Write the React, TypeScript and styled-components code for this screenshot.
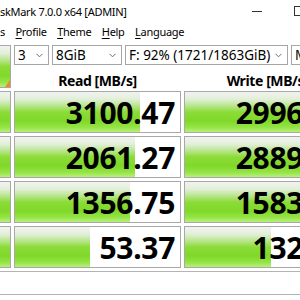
import React from 'react';
import styled, { createGlobalStyle } from 'styled-components';

const GlobalStyle = createGlobalStyle`
    html, body {
        margin: 0;
        padding: 0;
        background: #ffffff;
        overflow: hidden;
    }
    body {
        font-family: "Noto Sans", "Open Sans", sans-serif;
        color: #000000;
    }
`;

const results = [
    { read: 3100.47, write: 2996.52 },
    { read: 2061.27, write: 2889.41 },
    { read: 1356.75, write: 1583.03 },
    { read: 53.37, write: 132.87 },
];

// crystaldiskmark meter is log scaled
function meter(value: number) {
    const pct = 15.8 + 17.2 * Math.log10(value);
    return Math.max(0, Math.min(100, pct));
}

function Chevron() {
    return (
        <svg width="7" height="5" viewBox="0 0 7 5">
            <polyline points="0.5,0.8 3.5,3.8 6.5,0.8" fill="none" stroke="#707070" strokeWidth="1" />
        </svg>
    );
}

export default function App() {
    return (
        <Viewport>
            <GlobalStyle />
            <Window>
                <TitleBar>
                    <Title>skMark 7.0.0 x64 [ADMIN]</Title>
                    <CaptionButton>
                        <svg width="10" height="10" viewBox="0 0 10 10">
                            <line x1="0" y1="5.5" x2="10" y2="5.5" stroke="#333" strokeWidth="1" />
                        </svg>
                    </CaptionButton>
                    <CaptionButton>
                        <svg width="10" height="10" viewBox="0 0 10 10">
                            <rect x="0.5" y="0.5" width="9" height="9" fill="none" stroke="#333" strokeWidth="1" />
                        </svg>
                    </CaptionButton>
                </TitleBar>

                <MenuBar>
                    <MenuItem $cut>s</MenuItem>
                    <MenuItem><u>P</u>rofile</MenuItem>
                    <MenuItem><u>T</u>heme</MenuItem>
                    <MenuItem><u>H</u>elp</MenuItem>
                    <MenuItem><u>L</u>anguage</MenuItem>
                </MenuBar>

                <TopSection>
                    <AllButton />
                    <Controls>
                        <ComboRow>
                            <Combo $width={35}><span>3</span><Chevron /></Combo>
                            <Combo $width={70}><span>8GiB</span><Chevron /></Combo>
                            <Combo $width={163}><span>F: 92% (1721/1863GiB)</span><Chevron /></Combo>
                            <Combo $width={60}><span>MB/s</span><Chevron /></Combo>
                        </ComboRow>
                        <HeaderRow>
                            <HeaderLabel>Read [MB/s]</HeaderLabel>
                            <HeaderLabel>Write [MB/s]</HeaderLabel>
                        </HeaderRow>
                    </Controls>
                </TopSection>

                <ResultGrid>
                    {results.map((r, i) => (
                        <React.Fragment key={i}>
                            <TestButton />
                            <Meter style={{ backgroundSize: `${meter(r.read)}% 100%` }}>
                                {r.read.toFixed(2)}
                            </Meter>
                            <Meter style={{ backgroundSize: `${meter(r.write)}% 100%` }}>
                                {r.write.toFixed(2)}
                            </Meter>
                        </React.Fragment>
                    ))}
                </ResultGrid>

                <CommentBox />
            </Window>
        </Viewport>
    );
};

const greenGradient = `linear-gradient(to bottom,
    #f2f3f1 0%,
    #e2efd9 18%,
    #b4e585 36%,
    #8cdc38 50%,
    #80d82a 72%,
    #94e444 88%,
    #b8f07c 100%)`;

const Viewport = styled.div`
    width: 300px;
    height: 300px;
    overflow: hidden;
    background: #ffffff;
`;

const Window = styled.div`
    width: 360px;
    display: flex;
    flex-direction: column;
`;

const TitleBar = styled.div`
    display: flex;
    align-items: center;
    height: 22px;
    font-size: 11px;
    letter-spacing: -0.3px;
`;

const Title = styled.div`
    flex: 0 0 236px;
    white-space: nowrap;
`;

const CaptionButton = styled.div`
    width: 42px;
    height: 22px;
    display: flex;
    align-items: center;
    justify-content: center;
`;

const MenuBar = styled.div`
    display: flex;
    align-items: center;
    height: 19px;
    font-size: 11px;
    letter-spacing: -0.3px;
    & u {
        text-decoration: underline;
        text-underline-offset: 2px;
    }
`;

const MenuItem = styled.div<{ $cut?: boolean }>`
    padding: ${p => (p.$cut ? '0 5px 0 0' : '0 5px 0 5.5px')};
    white-space: nowrap;
`;

const TopSection = styled.div`
    display: grid;
    grid-template-columns: 11px 1fr;
    column-gap: 3px;
    margin-top: 4px;
`;

const AllButton = styled.div`
    position: relative;
    box-sizing: border-box;
    border: 1px solid #a8a8a8;
    border-left: none;
    background: ${greenGradient};
    &::after {
        content: '';
        position: absolute;
        right: 0;
        bottom: 0;
        border-style: solid;
        border-width: 0 0 7px 5px;
        border-color: transparent transparent #f08a24 transparent;
    }
`;

const Controls = styled.div`
    display: flex;
    flex-direction: column;
`;

const ComboRow = styled.div`
    display: flex;
    gap: 3px;
`;

const Combo = styled.div<{ $width: number }>`
    flex: 0 0 ${p => p.$width}px;
    box-sizing: border-box;
    height: 20px;
    border: 1px solid #a6a6a6;
    background: #ffffff;
    display: flex;
    align-items: center;
    justify-content: space-between;
    padding: 0 5px 0 3px;
    font-size: 13.5px;
    white-space: nowrap;
    overflow: hidden;
`;

const HeaderRow = styled.div`
    display: grid;
    grid-template-columns: 167px 167px;
    column-gap: 3px;
    height: 23px;
`;

const HeaderLabel = styled.div`
    font-size: 14px;
    font-weight: 700;
    letter-spacing: -0.4px;
    text-align: center;
    line-height: 32px;
`;

const ResultGrid = styled.div`
    display: grid;
    grid-template-columns: 11px 167px 167px;
    grid-auto-rows: 42px;
    column-gap: 3px;
    row-gap: 3px;
    margin-top: 3px;
`;

const TestButton = styled.div`
    box-sizing: border-box;
    border: 1px solid #a8a8a8;
    border-left: none;
    background: ${greenGradient};
`;

const Meter = styled.div`
    box-sizing: border-box;
    border: 1px solid #a8a8a8;
    background-color: #ffffff;
    background-image: ${greenGradient};
    background-repeat: no-repeat;
    background-position: left top;
    text-align: right;
    padding-right: 5px;
    font-size: 30px;
    font-weight: 700;
    line-height: 42px;
    letter-spacing: -0.3px;
    white-space: nowrap;
    overflow: hidden;
`;

const CommentBox = styled.div`
    box-sizing: border-box;
    height: 24px;
    margin-top: 3px;
    border-top: 1px solid #b4b4b4;
    border-bottom: 1px solid #b4b4b4;
    background: #ffffff;
`;
